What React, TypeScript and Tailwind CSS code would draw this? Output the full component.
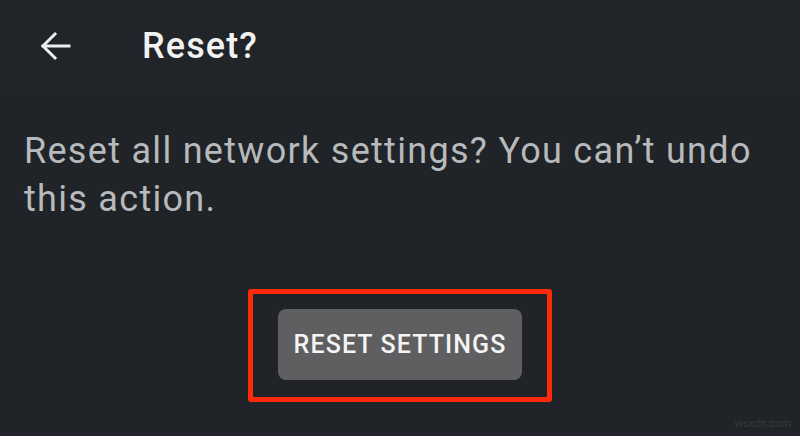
export default function App() {
  return (
    <div
      className="relative flex h-[436px] w-[800px] flex-col overflow-hidden bg-[#202327]"
      style={{ fontFamily: 'Roboto, "Liberation Sans", sans-serif' }}
    >
      <header className="flex h-[98px] items-center border-b border-[#1c1f22] bg-[#212529] pb-[6px]">
        <button className="ml-[38px] flex h-[34px] w-[34px] items-center justify-center text-[#eeeeee]">
          <svg width="32" height="32" viewBox="0 0 32 32" fill="none" stroke="currentColor" strokeWidth="3" strokeLinecap="square">
            <path d="M30 16H4" />
            <path d="M16 4L4 16l12 12" />
          </svg>
        </button>
        <h1 className="ml-[70px] text-[36px] font-medium tracking-[1.1px] text-[#f2f2f2]">Reset?</h1>
      </header>

      <main className="flex flex-col px-6 pt-[29px]">
        <p className="text-[36px] leading-[48px] tracking-[1.3px] text-[#b7babc]">
          Reset all network settings? You can’t undo this action.
        </p>

        <div className="mt-[66px] flex justify-center">
          <div className="rounded-[3px] border-[5px] border-[#ff2a0a] px-[25px] pb-[17px] pt-[15px]">
            <button className="flex h-[71px] w-[244px] items-center justify-center rounded-[8px] bg-[#5f5f61] text-[25px] font-medium tracking-[1.1px] text-[#f4f4f4]">
              RESET SETTINGS
            </button>
          </div>
        </div>
      </main>

      <span className="absolute bottom-[4px] right-[9px] text-[11px] text-[#363a3d]">wsxdn.com</span>
    </div>
  )
}
